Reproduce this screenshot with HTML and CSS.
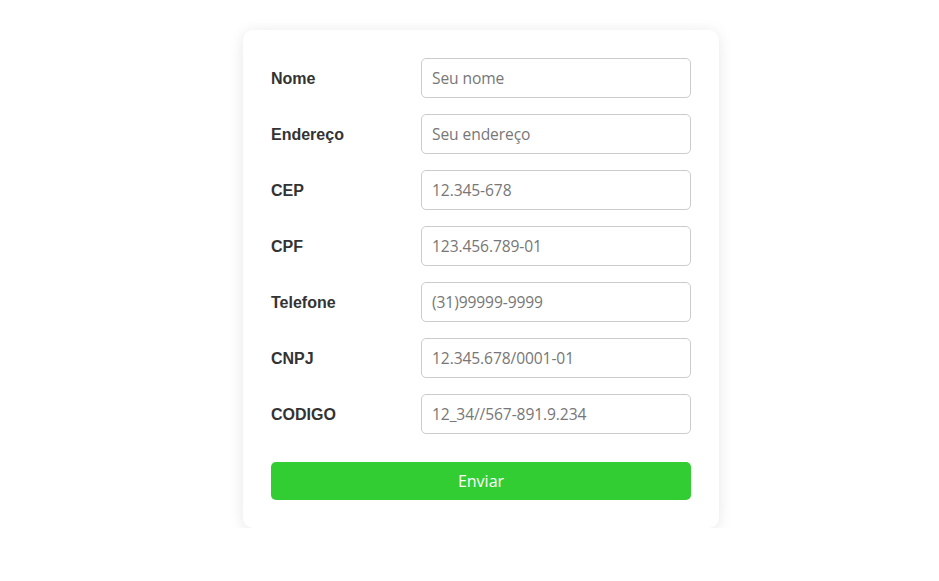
FILE: index.html
```html
<!DOCTYPE html>
<html lang="pt-BR">
<head>
<meta charset="utf-8">
<title>Formulário</title>
<link rel="stylesheet" href="styles.css">
</head>
<body>
<form class="card">
  <div class="row"><label class="label">Nome</label><input class="field" placeholder="Seu nome"></div>
  <div class="row"><label class="label">Endereço</label><input class="field" placeholder="Seu endereço"></div>
  <div class="row"><label class="label">CEP</label><input class="field" placeholder="12.345-678"></div>
  <div class="row"><label class="label">CPF</label><input class="field" placeholder="123.456.789-01"></div>
  <div class="row"><label class="label">Telefone</label><input class="field" placeholder="(31)99999-9999"></div>
  <div class="row"><label class="label">CNPJ</label><input class="field" placeholder="12.345.678/0001-01"></div>
  <div class="row"><label class="label">CODIGO</label><input class="field" placeholder="12_34//567-891.9.234"></div>
  <button class="submit" type="button">Enviar</button>
</form>
</body>
</html>
```
FILE: styles.css
```css
html, body {
  margin: 0;
  padding: 0;
  background: #ffffff;
}
body {
  padding: 30px 0 0 243px;
}
.card {
  width: 420px;
  padding: 28px;
  background: #fff;
  border-radius: 10px;
  box-shadow: 0 2px 15px rgba(0, 0, 0, 0.1);
  display: flex;
  flex-direction: column;
  gap: 16px;
}
.row {
  display: flex;
  align-items: center;
  height: 40px;
}
.label {
  width: 150px;
  padding-top: 2px;
  font-family: "Liberation Sans", Arial, sans-serif;
  font-weight: bold;
  font-size: 16px;
  color: #333;
}
.field {
  box-sizing: border-box;
  width: 270px;
  height: 40px;
  border: 1px solid #ccc;
  border-radius: 5px;
  padding: 0 10px;
  font-family: "Open Sans", sans-serif;
  font-size: 15.6px;
  letter-spacing: -0.1px;
  color: #333;
  outline: none;
}
.field::placeholder {
  color: #777;
}
.submit {
  margin-top: 12px;
  height: 38px;
  border: none;
  border-radius: 5px;
  background: #32cd32;
  color: #fff;
  font-family: "Open Sans", sans-serif;
  font-size: 16px;
  cursor: pointer;
}
```
